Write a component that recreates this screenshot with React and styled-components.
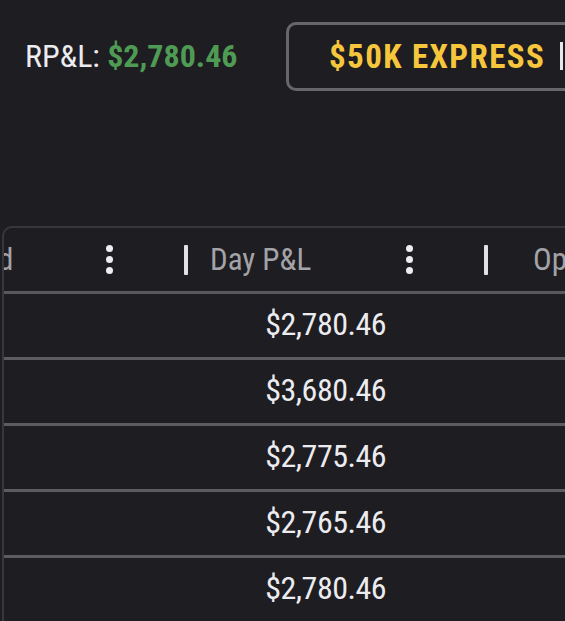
import React from 'react';
import styled, { createGlobalStyle } from 'styled-components';

const GlobalStyle = createGlobalStyle`
  html, body {
    margin: 0;
    background: #1e1d22;
  }
  body {
    font-family: "Roboto Condensed", Roboto, "Liberation Sans", sans-serif;
    font-stretch: 75%;
    color: #ececf0;
    overflow: hidden;
  }
`;

const Page = styled.div`
  width: 565px;
  height: 621px;
  overflow: hidden;
  background: #1e1d22;
`;

const TopBar = styled.div`
  display: flex;
  align-items: center;
  padding: 21px 0 0 25px;
  height: 70px;
  white-space: nowrap;
`;

const Pnl = styled.div`
  font-size: 32px;
  width: 261px;
  flex-shrink: 0;
`;

const PnlValue = styled.span`
  color: #4f9b53;
  font-weight: 700;
`;

const AccountButton = styled.div`
  flex-shrink: 0;
  display: flex;
  align-items: center;
  height: 69px;
  box-sizing: border-box;
  padding: 0 40px 0 40px;
  border: 3px solid #67676b;
  border-radius: 10px;
  color: #f6c73d;
  font-size: 33px;
  letter-spacing: 1.4px;
  font-weight: 700;
`;

const Caret = styled.span`
  display: inline-block;
  width: 3px;
  height: 28px;
  margin-left: 15px;
  background: #e6e6ea;
`;

const TableWrap = styled.div`
  margin: 135px 0 0 2px;
  border-top: 2px solid #38373c;
  border-left: 2px solid #38373c;
  border-top-left-radius: 10px;
  overflow: hidden;
`;

const Track = styled.div`
  margin-left: -120px;
  width: 900px;
`;

const Row = styled.div`
  display: grid;
  grid-template-columns: repeat(3, 300px);
  height: 63px;
  border-bottom: 3px solid ${p => (p.$head ? '#58585c' : '#5c5c60')};
`;

const HeadCell = styled.div`
  display: flex;
  align-items: center;
`;

const Resizer = styled.span`
  width: 4px;
  height: 30px;
  background: #e2e2e6;
  border-radius: 1px;
  flex-shrink: 0;
`;

const HeadLabel = styled.span`
  flex: 1;
  padding-left: ${p => p.$pad}px;
  font-size: 31px;
  color: #a3a3a8;
  white-space: nowrap;
  overflow: hidden;
`;

const Kebab = styled.span`
  display: flex;
  flex-direction: column;
  gap: 4px;
  margin-right: 71px;
  & > i {
    width: 7px;
    height: 7px;
    border-radius: 50%;
    background: #eeeef2;
  }
`;

const Cell = styled.div`
  display: flex;
  align-items: center;
  justify-content: flex-end;
  padding-right: 98px;
  padding-bottom: 3px;
  font-size: 32px;
  letter-spacing: -0.5px;
  color: #ececf0;
`;

const columns = [
  { label: 'Realized', pad: 22 },
  { label: 'Day P&L', pad: 22 },
  { label: 'Open P&L', pad: 45 },
];

const rows = ['$2,780.46', '$3,680.46', '$2,775.46', '$2,765.46', '$2,780.46'];

function HeaderCell({ label, pad }) {
  return (
    <HeadCell>
      <Resizer />
      <HeadLabel $pad={pad}>{label}</HeadLabel>
      <Kebab>
        <i />
        <i />
        <i />
      </Kebab>
    </HeadCell>
  );
}

export default function App() {
  return (
    <Page>
      <GlobalStyle />
      <TopBar>
        <Pnl>
          RP&amp;L: <PnlValue>$2,780.46</PnlValue>
        </Pnl>
        <AccountButton>
          $50K EXPRESS
          <Caret />
        </AccountButton>
      </TopBar>
      <TableWrap>
        <Track>
          <Row $head>
            {columns.map(c => (
              <HeaderCell key={c.label} {...c} />
            ))}
          </Row>
          {rows.map((v, i) => (
            <Row key={i}>
              <Cell />
              <Cell>{v}</Cell>
              <Cell />
            </Row>
          ))}
        </Track>
      </TableWrap>
    </Page>
  );
}
